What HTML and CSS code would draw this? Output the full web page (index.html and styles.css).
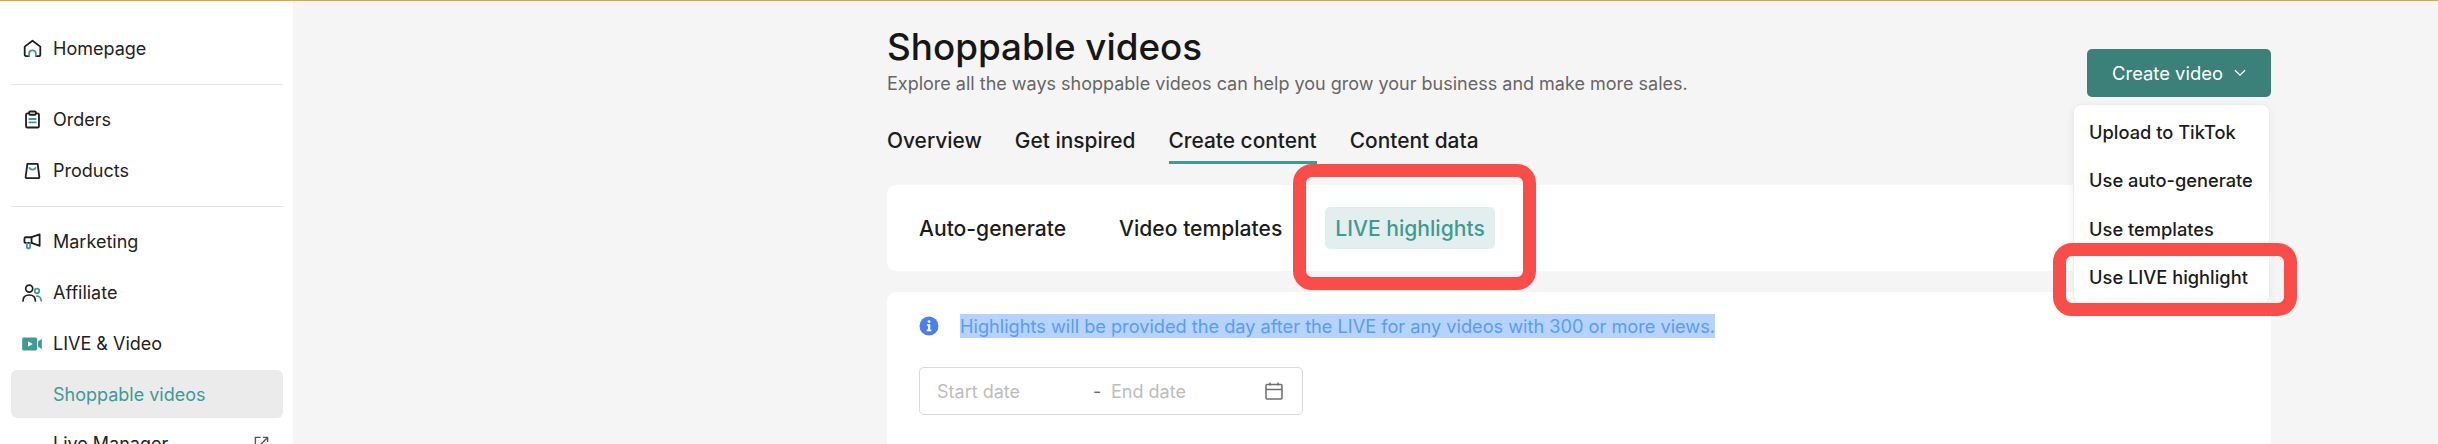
FILE: index.html
```html
<!DOCTYPE html>
<html lang="en">
<head>
    <meta charset="UTF-8">
    <title>Shoppable videos</title>
    <link rel="stylesheet" href="styles.css">
</head>
<body>
    <div class="page">
        <!-- Sidebar -->
        <nav class="sidebar">
            <a class="nav-item">
                <svg class="nav-icon" viewBox="0 0 20 20" fill="none" stroke-width="1.9" stroke-linejoin="round" stroke-linecap="round">
                    <path stroke="#1f1f1f" d="M6.5 18H3.2C2.3 18 1.8 17.4 1.8 16.6V8L10 1.8 18.2 8V16.6C18.2 17.4 17.7 18 16.8 18H13.5"/>
                    <path stroke="#3f9a92" d="M6.5 18V15C6.5 13 8 12 10 12S13.5 13 13.5 15V18"/>
                </svg>
                Homepage
            </a>
            <div class="nav-divider"></div>
            <a class="nav-item">
                <svg class="nav-icon" viewBox="0 0 20 20" fill="none" stroke-width="1.9" stroke-linejoin="round" stroke-linecap="round">
                    <path stroke="#1f1f1f" d="M6.5 3.5H4.6C3.8 3.5 3.2 4.1 3.2 4.9V17C3.2 17.8 3.8 18.4 4.6 18.4H15.4C16.2 18.4 16.8 17.8 16.8 17V4.9C16.8 4.1 16.2 3.5 15.4 3.5H13.5"/>
                    <rect stroke="#1f1f1f" x="6.5" y="1.6" width="7" height="3.4" rx="1"/>
                    <path stroke="#3f9a92" stroke-width="2" d="M6.6 9.4H13.4M6.6 13H13.4"/>
                </svg>
                Orders
            </a>
            <a class="nav-item">
                <svg class="nav-icon" viewBox="0 0 20 20" fill="none" stroke-width="1.9" stroke-linejoin="round" stroke-linecap="round">
                    <path stroke="#1f1f1f" d="M4.6 3H15.4L17.2 16.6C17.3 17.5 16.7 18 16 18H4C3.3 18 2.7 17.5 2.8 16.6Z"/>
                    <path stroke="#3f9a92" d="M6.8 7.2C7.8 9.6 12.2 9.6 13.2 7.2"/>
                </svg>
                Products
            </a>
            <div class="nav-divider"></div>
            <a class="nav-item">
                <svg class="nav-icon" viewBox="0 0 20 20" fill="none" stroke-width="1.9" stroke-linejoin="round" stroke-linecap="round">
                    <path stroke="#1f1f1f" d="M17.5 2.5V14.5L9 11.5H3C2 11.5 1.5 11 1.5 10V7C1.5 6 2 5.5 3 5.5H9Z"/>
                    <path stroke="#1f1f1f" d="M9 5.5V11.5"/>
                    <path stroke="#3f9a92" d="M4 11.5V15.5C4 17.8 7.5 17.8 7.5 15.5V11.5"/>
                </svg>
                Marketing
            </a>
            <a class="nav-item">
                <svg class="nav-icon nav-icon-wide" viewBox="0 0 20 20" fill="none" stroke-width="1.7" stroke-linecap="round">
                    <circle stroke="#1f1f1f" cx="7.2" cy="5.6" r="3.5"/>
                    <path stroke="#1f1f1f" d="M1 18C1 14.2 3.6 12 7.2 12S13.4 14.2 13.4 18"/>
                    <circle stroke="#3f9a92" cx="15" cy="8" r="2.3"/>
                    <path stroke="#3f9a92" d="M14.6 13C17 13 19 15 19.3 18"/>
                </svg>
                Affiliate
            </a>
            <a class="nav-item">
                <svg class="nav-icon nav-icon-wide" viewBox="0 0 20 20">
                    <path fill="#3f9a92" d="M1.6 3.6H13.6C14.4 3.6 15 4.2 15 5V15C15 15.8 14.4 16.4 13.6 16.4H1.6C.8 16.4 .2 15.8 .2 15V5C.2 4.2 .8 3.6 1.6 3.6ZM16 7.6 19.8 4.8V15.2L16 12.4Z"/>
                    <path fill="#fff" d="M6 7.2 10.6 10 6 12.8Z"/>
                </svg>
                LIVE &amp; Video
            </a>
            <a class="nav-item nav-sub nav-active">Shoppable videos</a>
            <a class="nav-item nav-sub">
                Live Manager
                <svg class="nav-external" viewBox="0 0 16 16" fill="none" stroke="#555" stroke-width="1.5">
                    <path d="M7 1.5H1.5V14.5H14.5V9"/>
                    <path d="M7 9 14.5 1.5M9.5 1.5H14.5V6.5"/>
                </svg>
            </a>
        </nav>

        <!-- Main content -->
        <main class="main">
            <div class="content">
                <div class="page-head">
                    <div>
                        <h1 class="page-title">Shoppable videos</h1>
                        <p class="page-sub">Explore all the ways shoppable videos can help you grow your business and make more sales.</p>
                    </div>
                    <button class="create-btn">
                        Create video
                        <svg class="create-chevron" viewBox="0 0 12 8" fill="none" stroke="#fff" stroke-width="1.3">
                            <path d="M1 1.2 6 6.2 11 1.2"/>
                        </svg>
                    </button>
                </div>

                <div class="tabs">
                    <a class="tab">Overview</a>
                    <a class="tab">Get inspired</a>
                    <a class="tab tab-active">Create content</a>
                    <a class="tab">Content data</a>
                </div>

                <div class="card source-card">
                    <a class="source">Auto-generate</a>
                    <a class="source">Video templates</a>
                    <a class="source source-active">
                        LIVE highlights
                        <span class="mark mark-source"></span>
                    </a>
                </div>

                <div class="card list-card">
                    <div class="notice">
                        <svg class="notice-icon" viewBox="0 0 20 20">
                            <circle cx="10" cy="10" r="9.5" fill="#4a7fee"/>
                            <circle cx="10" cy="5.6" r="1.4" fill="#fff"/>
                            <path fill="#fff" d="M7.8 8.2H11.2V13.6H12.4V15.2H7.6V13.6H9V9.8H7.8Z"/>
                        </svg>
                        <span class="notice-text">Highlights will be provided the day after the LIVE for any videos with 300 or more views.</span>
                    </div>
                    <div class="date-range">
                        <span class="date-start">Start date</span>
                        <span class="date-sep">-</span>
                        <span class="date-end">End date</span>
                        <svg class="date-icon" viewBox="0 0 18 18" fill="none" stroke="#6f6f6f" stroke-width="1.5">
                            <rect x="1" y="2.5" width="16" height="14.5" rx="1"/>
                            <path d="M1 7.5H17M5 .5V3.5M13 .5V3.5"/>
                        </svg>
                    </div>
                </div>

                <!-- Dropdown of the create button -->
                <div class="menu">
                    <a class="menu-item">Upload to TikTok</a>
                    <a class="menu-item">Use auto-generate</a>
                    <a class="menu-item">Use templates</a>
                    <a class="menu-item">Use LIVE highlight</a>
                    <span class="mark mark-menu"></span>
                </div>
            </div>
        </main>
    </div>
</body>
</html>
```

FILE: styles.css
```css
* {
    box-sizing: border-box;
}
html, body {
    height: 100%;
}
body {
    margin: 0;
    overflow: hidden;
    font-family: Inter, "Liberation Sans", sans-serif;
    color: #1f1f1f;
    background-color: #f5f5f5;
    border-top: 1px solid #e2a535;
}
.page {
    display: flex;
    height: 443px;
}

/* Sidebar */
.sidebar {
    width: 293px;
    flex-shrink: 0;
    padding: 22px 10px 0 11px;
    background-color: #fff;
    overflow: hidden;
}
.nav-item {
    display: flex;
    align-items: center;
    height: 51px;
    padding-left: 11px;
    font-size: 18px;
    color: #222;
}
.nav-icon {
    width: 19px;
    height: 19px;
    margin-right: 11px;
    margin-left: 1px;
    flex-shrink: 0;
}
.nav-icon-wide {
    width: 20px;
    height: 20px;
    margin-left: 0;
}
.nav-divider {
    height: 1px;
    margin: 10px 0 9px;
    background-color: #e3e3e3;
}
.nav-sub {
    padding-left: 42px;
}
.nav-active {
    height: 48px;
    margin-top: 1px;
    border-radius: 6px;
    background-color: #ebebeb;
    color: #409a93;
}
.nav-external {
    width: 15px;
    height: 15px;
    margin-left: auto;
    margin-right: 14px;
}

/* Main */
.main {
    flex: 1;
    min-width: 0;
}
.content {
    position: relative;
    width: 1384px;
    margin-left: 594px;
}
.page-head {
    display: flex;
    justify-content: space-between;
    align-items: flex-start;
    height: 107px;
    padding-top: 24px;
}
.page-title {
    margin: 0;
    font-size: 36.8px;
    line-height: 44px;
    font-weight: 500;
    color: #161616;
}
.page-sub {
    margin: 3px 0 0;
    font-size: 18px;
    line-height: 24px;
    color: #666;
}
.create-btn {
    display: flex;
    align-items: center;
    justify-content: center;
    gap: 11px;
    width: 184px;
    height: 48px;
    margin-top: 24px;
    border: 0;
    border-radius: 5px;
    background-color: #3b8079;
    color: #fff;
    font-family: inherit;
    font-size: 18.4px;
}
.create-chevron {
    width: 12px;
    height: 8px;
}
.tabs {
    display: flex;
    gap: 33px;
    height: 56px;
    padding-top: 19px;
}
.tab {
    height: 37px;
    font-size: 20.9px;
    line-height: 28px;
    font-weight: 500;
    color: #1c1c1c;
}
.tab-active {
    border-bottom: 3px solid #3f9a92;
}
.card {
    background-color: #fff;
    border-radius: 9px;
}
.source-card {
    display: flex;
    align-items: center;
    gap: 33px;
    height: 86px;
    margin-top: 21px;
    padding-left: 22px;
}
.source {
    position: relative;
    height: 42px;
    padding: 0 10px;
    font-size: 21.1px;
    line-height: 44px;
    font-weight: 500;
    color: #1c1c1c;
}
.source-active {
    border-radius: 5px;
    background-color: #e3efee;
    color: #409a93;
}
.list-card {
    height: 200px;
    margin-top: 21px;
    padding: 22px 32px;
}
.notice {
    display: flex;
    align-items: center;
    gap: 21px;
    height: 24px;
}
.notice-icon {
    width: 20px;
    height: 20px;
    flex-shrink: 0;
}
.notice-text {
    font-size: 18.18px;
    line-height: 24px;
    color: #5a9cf8;
    background-color: #b5d3fb;
}
.date-range {
    display: flex;
    align-items: center;
    width: 384px;
    height: 48px;
    margin-top: 29px;
    padding: 0 19px 0 17px;
    border: 1px solid #d9d9d9;
    border-radius: 5px;
    font-size: 18px;
    color: #bdbdbd;
}
.date-start {
    width: 156px;
}
.date-sep {
    width: 18px;
    color: #6f6f6f;
}
.date-icon {
    width: 18px;
    height: 18px;
    margin-left: auto;
}

/* Dropdown */
.menu {
    position: absolute;
    top: 103px;
    right: 1px;
    width: 197px;
    height: 201px;
    padding-top: 3px;
    background-color: #fff;
    border: 1px solid #ececec;
    border-radius: 8px;
    box-shadow: 0 2px 10px rgba(0, 0, 0, 0.06);
}
.menu-item {
    display: block;
    height: 48.3px;
    padding-left: 15px;
    font-size: 18.3px;
    line-height: 48px;
    font-weight: 500;
    color: #1c1c1c;
}

/* Red annotation boxes */
.mark {
    position: absolute;
    border: 13px solid #f94d4a;
    border-radius: 19px;
}
.mark-source {
    top: -43px;
    right: -41px;
    bottom: -41px;
    left: -32px;
}
.mark-menu {
    top: 138px;
    right: -28px;
    bottom: -12px;
    left: -21px;
}
```
